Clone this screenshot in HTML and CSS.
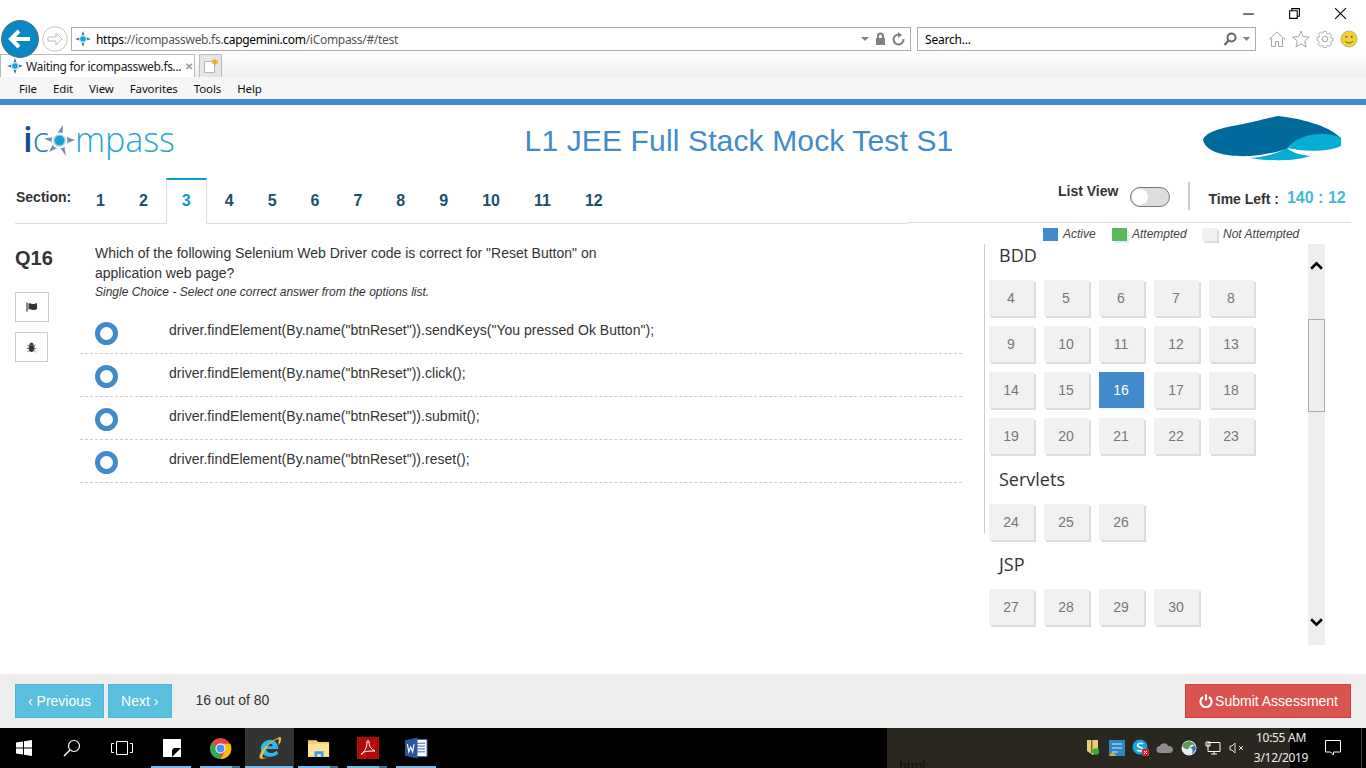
FILE: index.html
```html
<!DOCTYPE html>
<html lang="en">
<head>
    <meta charset="UTF-8">
    <title>iCompass</title>
    <link rel="stylesheet" href="styles.css">
</head>
<body>

    <!-- Browser window controls -->
    <div class="win-bar">
        <svg class="win-btn" viewBox="0 0 12 12"><path d="M1 6.500h10" stroke="#000" fill="none"/></svg>
        <svg class="win-btn" viewBox="0 0 12 12"><path d="M1.500 3.500h7v7h-7zM3.500 3.500v-2h7v7h-2" stroke="#000" fill="none"/></svg>
        <svg class="win-btn" viewBox="0 0 12 12"><path d="M1 1l10 10M11 1L1 11" stroke="#000" fill="none"/></svg>
    </div>

    <!-- Address row -->
    <div class="nav-row">
        <svg class="back-btn" viewBox="0 0 38 38">
            <circle cx="19" cy="19" r="18.500" fill="#0a87c5" stroke="#6b6b6b" stroke-width="1"/>
            <path d="M29 19H11M18 11l-8 8 8 8" stroke="#fff" stroke-width="4" fill="none"/>
        </svg>
        <svg class="forward-btn" viewBox="0 0 26 26">
            <circle cx="13" cy="13" r="12.300" fill="#fff" stroke="#c4c4c4"/>
            <path d="M6 11h8V7l6 6-6 6v-4H6z" fill="none" stroke="#bdbdbd"/>
        </svg>
        <div class="address-box">
            <svg class="favicon" viewBox="0 0 16 16">
                <path d="M8 0l2 6 6 2-6 2-2 6-2-6-6-2 6-2z" fill="#3e6fa3"/>
                <circle cx="8" cy="8" r="4" fill="#dcecf5"/>
                <circle cx="8" cy="8" r="2.800" fill="#17a5d8"/>
            </svg>
            <span class="url"><b>https</b>://icompassweb.fs.<b>capgemini.com</b>/iCompass/#/test</span>
            <svg class="addr-icons" viewBox="0 0 44 14">
                <path d="M0 5h8L4 9z" fill="#808080"/>
                <path d="M16 6V4a3.500 3.500 0 0 1 7 0v2h1v7H15V6zm2 0h3V4a1.500 1.500 0 0 0-3 0z" fill="#808080"/>
                <path d="M38 2.500a5 5 0 1 0 4.500 4.500" fill="none" stroke="#808080" stroke-width="2"/>
                <path d="M37 0v6l4-3z" fill="#808080"/>
            </svg>
        </div>
        <div class="search-box">
            <span>Search...</span>
            <svg class="search-icons" viewBox="0 0 28 14">
                <circle cx="8.500" cy="5.500" r="4" fill="none" stroke="#666" stroke-width="2"/>
                <path d="M5.500 8.500L1.500 13" stroke="#666" stroke-width="2.200"/>
                <path d="M20 5h7l-3.500 4z" fill="#808080"/>
            </svg>
        </div>
        <div class="tool-icons">
            <svg class="tool-icon" viewBox="0 0 18 18"><path d="M1 9.500L9 2l8 7.500M3.500 8v8.500h4v-5h3v5h4V8" fill="none" stroke="#a5a5a5"/></svg>
            <svg class="tool-icon" viewBox="0 0 18 18"><path d="M9 1l2.300 5.600 6 .5-4.600 3.900 1.400 5.900L9 13.800 3.900 16.900l1.400-5.900L.7 7.100l6-.5z" fill="none" stroke="#a5a5a5"/></svg>
            <svg class="tool-icon" viewBox="0 0 18 18"><circle cx="9" cy="9" r="2.800" fill="none" stroke="#a5a5a5"/><path d="M7.500 1h3l.5 2.400 1.500.6 2-1.300 2.100 2.100-1.300 2 .6 1.500 2.400.5v3l-2.400.5-.6 1.500 1.300 2-2.100 2.100-2-1.300-1.500.6-.5 2.400h-3l-.5-2.400-1.500-.6-2 1.300-2.100-2.100 1.300-2-.6-1.500L.1 10.800v-3l2.400-.5.600-1.500-1.300-2 2.100-2.100 2 1.300 1.500-.6z" transform="scale(.88) translate(1.100 .6)" fill="none" stroke="#a5a5a5"/></svg>
            <svg class="tool-icon" viewBox="0 0 18 18"><circle cx="9" cy="9" r="8" fill="#f3d033" stroke="#b9b48a"/><circle cx="6.300" cy="6.800" r="1" fill="#6b5a10"/><circle cx="11.700" cy="6.800" r="1" fill="#6b5a10"/><path d="M5 11c1.500 2.500 6.500 2.500 8 0" fill="none" stroke="#6b5a10"/></svg>
        </div>
    </div>

    <!-- Tab row -->
    <div class="tab-row">
        <div class="browser-tab">
            <svg class="favicon" viewBox="0 0 16 16">
                <path d="M8 0l2 6 6 2-6 2-2 6-2-6-6-2 6-2z" fill="#3e6fa3"/>
                <circle cx="8" cy="8" r="4" fill="#dcecf5"/>
                <circle cx="8" cy="8" r="2.800" fill="#17a5d8"/>
            </svg>
            <span class="tab-title">Waiting for icompassweb.fs...</span>
            <span class="tab-close">&#10005;</span>
        </div>
        <div class="new-tab">
            <svg viewBox="0 0 16 16" width="16" height="16">
                <path d="M1.500 3.500h10v11h-10z" fill="#fff" stroke="#b5b5b5"/>
                <path d="M12 0l1 2.500 2.500-.5-1.500 2 1.500 2-2.500-.5-1 2.500-1-2.500-2.500.5 1.500-2-1.500-2 2.500.5z" fill="#f5a623"/>
            </svg>
        </div>
    </div>

    <!-- Menu row -->
    <div class="menu-row">
        <span class="menu-item">File</span>
        <span class="menu-item">Edit</span>
        <span class="menu-item">View</span>
        <span class="menu-item">Favorites</span>
        <span class="menu-item">Tools</span>
        <span class="menu-item">Help</span>
    </div>

    <!-- Page -->
    <div class="page">
        <div class="page-header">
            <div class="logo">
                <span class="logo-i">i</span><span class="logo-c">c</span><svg class="logo-star" viewBox="0 0 31 32">
                    <path d="M19 0l-.5 10.500L31 15l-11 4.500L22 31l-6.500-9L5 27l4.500-9L0 13.500 10.500 12z" fill="#6e8fb5"/>
                    <circle cx="15.500" cy="15.500" r="8" fill="#fff"/>
                    <circle cx="15.500" cy="15.500" r="6.300" fill="#a9cfe4"/>
                    <circle cx="15.500" cy="15.500" r="4.800" fill="#12a3d4"/>
                </svg><span class="logo-rest">mpass</span>
            </div>
            <h1 class="page-title">L1 JEE Full Stack Mock Test S1</h1>
            <svg class="client-logo" viewBox="0 0 139 46">
                <path d="M0 25C2 17 18 13 40 9 55 6 65 3 75 1c20 2 50 9 63 22v1C125 31 100 33 84 34 70 38 60 40 47 41 25 42 3 38 0 25z" fill="#006a9c"/>
                <path d="M84 33c8-9 20-14 34-14 8 0 15 1 20 4v8c-13 6-38 6-54 2z" fill="#06add6"/>
                <path d="M47 43c15-1 29-5 37-10 6 5 14 7 24 8l-8 2C88 46 62 46 47 43z" fill="#06add6"/>
                <path d="M84 33c8 1 16 3 24 8-8-1-18-3-24-8z" fill="#fff"/>
            </svg>
        </div>

        <div class="section-row">
            <span class="section-label">Section:</span>
            <ul class="section-tabs">
                <li>1</li>
                <li>2</li>
                <li class="active">3</li>
                <li>4</li>
                <li>5</li>
                <li>6</li>
                <li>7</li>
                <li>8</li>
                <li>9</li>
                <li>10</li>
                <li>11</li>
                <li>12</li>
            </ul>
            <div class="section-right">
                <span class="list-view">List View</span>
                <span class="toggle"><span class="toggle-knob"></span></span>
                <span class="divider"></span>
                <span class="time-label">Time Left :</span>
                <span class="time-value">140 : 12</span>
            </div>
        </div>

        <div class="legend">
            <span class="swatch swatch-active"></span><span class="legend-text legend-active">Active</span>
            <span class="swatch swatch-attempted"></span><span class="legend-text legend-attempted">Attempted</span>
            <span class="swatch swatch-none"></span><span class="legend-text">Not Attempted</span>
        </div>

        <div class="main">
            <div class="q-side">
                <div class="q-no">Q16</div>
                <div class="q-btn q-btn-flag">
                    <svg viewBox="0 0 12 12" width="12" height="12"><path d="M1 1.500v9" stroke="#333" stroke-width="1.200"/><path d="M2.500 2.500c2-1 3 .5 4.500 .5s3-.5 4-1v6C10 8.500 9 9 7 9S4 8 2.500 8.500z" fill="#333"/></svg>
                </div>
                <div class="q-btn">
                    <svg viewBox="0 0 12 12" width="11" height="11"><path d="M4 3a2 2 0 0 1 4 0zM3.500 4h5v4a2.500 2.500 0 0 1-5 0zM1.500 3l2 2M10.500 3l-2 2M1 7h2.500M11 7H8.500M1.500 11l2-2M10.500 11l-2-2" fill="#333" stroke="#333" stroke-width=".8"/></svg>
                </div>
            </div>

            <div class="q-body">
                <div class="q-text">Which of the following Selenium Web Driver code is correct for "Reset Button" on application web page?</div>
                <div class="q-hint">Single Choice - Select one correct answer from the options list.</div>
                <div class="option"><span class="radio"></span><span>driver.findElement(By.name("btnReset")).sendKeys("You pressed Ok Button");</span></div>
                <div class="option"><span class="radio"></span><span>driver.findElement(By.name("btnReset")).click();</span></div>
                <div class="option"><span class="radio"></span><span>driver.findElement(By.name("btnReset")).submit();</span></div>
                <div class="option"><span class="radio"></span><span>driver.findElement(By.name("btnReset")).reset();</span></div>
            </div>

            <div class="palette">
                <div class="palette-list">
                    <h4 class="topic topic-first">BDD</h4>
                    <div class="num-grid">
                        <span class="num">4</span><span class="num">5</span><span class="num">6</span><span class="num">7</span><span class="num">8</span>
                        <span class="num">9</span><span class="num">10</span><span class="num">11</span><span class="num">12</span><span class="num">13</span>
                        <span class="num">14</span><span class="num">15</span><span class="num num-active">16</span><span class="num">17</span><span class="num">18</span>
                        <span class="num">19</span><span class="num">20</span><span class="num">21</span><span class="num">22</span><span class="num">23</span>
                    </div>
                    <h4 class="topic">Servlets</h4>
                    <div class="num-grid">
                        <span class="num">24</span><span class="num">25</span><span class="num">26</span>
                    </div>
                    <h4 class="topic">JSP</h4>
                    <div class="num-grid">
                        <span class="num">27</span><span class="num">28</span><span class="num">29</span><span class="num">30</span>
                    </div>
                    <h4 class="topic topic-cut">Core Skills</h4>
                </div>
                <div class="scrollbar">
                    <svg class="scroll-arrow" viewBox="0 0 12 8"><path d="M1 7l5-5 5 5" fill="none" stroke="#000" stroke-width="2.400"/></svg>
                    <span class="scroll-thumb"></span>
                    <svg class="scroll-arrow scroll-arrow-down" viewBox="0 0 12 8"><path d="M1 1l5 5 5-5" fill="none" stroke="#000" stroke-width="2.400"/></svg>
                </div>
            </div>
        </div>

        <div class="page-footer">
            <a class="btn btn-info">&#8249; Previous</a>
            <a class="btn btn-info btn-next">Next &#8250;</a>
            <span class="q-count">16 out of 80</span>
            <a class="btn btn-danger">
                <svg viewBox="0 0 14 14" width="14" height="14"><path d="M4 3a5.500 5.500 0 1 0 6 0" fill="none" stroke="#fff" stroke-width="2.200"/><path d="M7 .5v6" stroke="#fff" stroke-width="2.200"/></svg>
                Submit Assessment
            </a>
        </div>
    </div>

    <!-- Windows taskbar -->
    <div class="taskbar">
        <svg class="task-start" viewBox="0 0 16 16"><path d="M0 2.500l7-1V7.500H0zM8 1.300L16 0v7.500H8zM0 8.500h7v6l-7-1zM8 8.500h8V16l-8-1.200z" fill="#fff"/></svg>
        <svg class="task-search" viewBox="0 0 18 18"><circle cx="11" cy="7" r="5.500" fill="none" stroke="#fff" stroke-width="1.200"/><path d="M7 11l-6 6" stroke="#fff" stroke-width="1.400"/></svg>
        <svg class="task-view" viewBox="0 0 22 14"><path d="M5.500 .5h11v13h-11zM3 2.500H.5v9H3M19 2.500h2.500v9H19" fill="none" stroke="#fff"/></svg>
        <div class="task-apps">
            <span class="task-app"><svg viewBox="0 0 18 18" width="18" height="18"><path d="M0 0h18v18H0z" fill="#fff"/><path d="M9 18l9-9H11l-2 2z" fill="#000"/></svg></span>
            <span class="task-app task-app-multi"><svg viewBox="0 0 24 24" width="23" height="23"><circle cx="12" cy="12" r="11" fill="#e8453c"/><path d="M12 12L2.500 6.500A11 11 0 0 0 12 23z" fill="#34a853"/><path d="M12 7h10.200A11 11 0 0 1 12 23l5-9z" fill="#fbbc05"/><circle cx="12" cy="12" r="5.300" fill="#fff"/><circle cx="12" cy="12" r="4.200" fill="#4e8ef7"/></svg></span>
            <span class="task-app task-app-active"><svg viewBox="0 0 26 26" width="24" height="24"><path d="M3 14c0-6 5-10 10-10s9 4 9 10H9c0 5 7 6 11 2l2 3c-6 6-19 4-19-5zm6-3h7c0-4-6-4-7 0z" fill="#2fb8ec"/><path d="M2 24C0 20 8 7 24 1c2 1 1 6-2 9 0-3 1-6 0-7C12 6 4 19 5 23c1 1 4 1 7-1-3 3-8 3-10 2z" fill="#f2c02e"/></svg></span>
            <span class="task-app task-app-multi"><svg viewBox="0 0 24 20" width="22" height="19"><path d="M0 1h9l2 2h12v16H0z" fill="#f5cf6b"/><path d="M0 5h23v14H0z" fill="#fde39a"/><path d="M7 13h10v6H7z" fill="#2ea6e0"/><path d="M10 16h4v3h-4z" fill="#fde39a"/></svg></span>
            <span class="task-app task-app-multi"><svg viewBox="0 0 22 22" width="22" height="22"><path d="M0 0h22v22H0z" fill="#b30b0b"/><path d="M4 17c4-2 6-7 6-12 0-2 2-2 2 0 0 4 2 7 6 9-4 0-8 0-11 1-1 1-2 3-3 2z" fill="none" stroke="#fff"/></svg></span>
            <span class="task-app"><svg viewBox="0 0 24 22" width="23" height="22"><path d="M9 2h14v18H9z" fill="#fff" stroke="#3b5f9e"/><path d="M12 6h9M12 9h9M12 12h9M12 15h9" stroke="#3b5f9e"/><path d="M0 3l13-3v22L0 19z" fill="#2b579a"/><path d="M2.500 7l1.500 8 2-5 2 5 1.500-8" stroke="#fff" fill="none" stroke-width="1.200"/></svg></span>
        </div>
        <div class="task-tray">
            <span class="peek-text">html;</span>
            <div class="tray-icons">
                <svg viewBox="0 0 14 16" width="14" height="16"><path d="M1 0h11v10l-5 5-6-4z" fill="#e9cf73"/><path d="M5 0h1.500v13H5z" fill="#7a6a2a"/><circle cx="10" cy="11.500" r="3.200" fill="#2eaf35"/></svg>
                <svg viewBox="0 0 16 16" width="16" height="16"><path d="M0 0h16v16H0z" fill="#2e87c5"/><path d="M3 4h10M3 8h10M3 12h6" stroke="#d4ecf7"/><path d="M0 16l4-5 3 5z" fill="#d9a441"/></svg>
                <svg viewBox="0 0 18 18" width="18" height="18"><circle cx="8" cy="8" r="7.500" fill="#14a5e0"/><path d="M11 5c-1-1-6-1-5.500 1.500S11 8 10.800 10.500 6 12 5 11" fill="none" stroke="#fff" stroke-width="1.500"/><path d="M10 10h7v7h-7z" fill="#d8232a"/><path d="M12 12l3 3M15 12l-3 3" stroke="#fff"/></svg>
                <svg viewBox="0 0 18 12" width="18" height="12"><path d="M4 11a3.500 3.500 0 0 1 0-7c1-3 7-4 8 0 3-.5 5 1.500 5 3.500S15.500 11 14 11z" fill="#8d8d8d"/></svg>
                <svg viewBox="0 0 16 16" width="16" height="16"><circle cx="8" cy="8" r="7.500" fill="#e8eef0"/><path d="M1 6c3-6 10-6 13-1-3-1-5 0-6 3-2 3-5 0-7-2z" fill="#5f9a5a"/><path d="M9 8c3 0 3 3 2 7l4-6-1-4z" fill="#2f78b5"/></svg>
                <svg viewBox="0 0 16 14" width="16" height="14"><path d="M3 1.500h12v9H3zM1 1h4v4H1zM6 13h6M9 10.500V13" fill="#2a2720" stroke="#fff"/></svg>
                <svg viewBox="0 0 16 14" width="16" height="14"><path d="M1 5h2l3-3v10L3 9H1zM10 5l4 4M14 5l-4 4" fill="none" stroke="#ddd"/></svg>
            </div>
            <div class="clock">10:55 AM<br>3/12/2019</div>
            <svg class="notify" viewBox="0 0 16 16"><path d="M.5 .5h15v11.500H8.500v3l-3-3H.5z" fill="none" stroke="#fff"/></svg>
        </div>
    </div>

</body>
</html>
```
FILE: styles.css
```css
* {
    box-sizing: border-box;
}
body {
    margin: 0;
    width: 1366px;
    height: 768px;
    overflow: hidden;
    display: flex;
    flex-direction: column;
    background: #fff;
    font-family: "Liberation Sans", Arial, sans-serif;
    color: #333;
}

/* browser chrome */
.win-bar {
    height: 27px;
    flex: none;
    display: flex;
    justify-content: flex-end;
    align-items: center;
    gap: 33px;
    padding: 0 19px 0 0;
}
.win-btn {
    width: 13px;
    height: 13px;
}
.nav-row {
    height: 27px;
    flex: none;
    position: relative;
    display: flex;
    padding-left: 71px;
}
.back-btn {
    position: absolute;
    left: 1px;
    top: -7px;
    width: 38px;
    height: 38px;
}
.forward-btn {
    position: absolute;
    left: 42px;
    top: -1px;
    width: 26px;
    height: 26px;
}
.address-box, .search-box {
    height: 24px;
    border: 1px solid #adadad;
    display: flex;
    align-items: center;
    font-family: "Noto Sans", "Open Sans", sans-serif;
    font-size: 12px;
    background: #fff;
}
.address-box {
    width: 840px;
    padding-left: 3px;
    color: #555;
}
.favicon {
    width: 16px;
    height: 16px;
    flex: none;
}
.url {
    margin-left: 5px;
    flex: 1;
    letter-spacing: -.3px;
}
.url b {
    font-weight: 400;
    color: #000;
}
.addr-icons {
    width: 44px;
    height: 14px;
    margin-right: 5px;
}
.search-box {
    width: 339px;
    margin-left: 6px;
    padding-left: 7px;
    justify-content: space-between;
    color: #000;
    letter-spacing: -.2px;
}
.search-icons {
    width: 28px;
    height: 14px;
    margin-right: 4px;
}
.tool-icons {
    display: flex;
    gap: 6px;
    margin-left: 12px;
    height: 24px;
    align-items: center;
}
.tool-icon {
    width: 18px;
    height: 18px;
}
.tab-row {
    height: 23px;
    flex: none;
    display: flex;
    background: linear-gradient(#fff, #eee);
}
.browser-tab {
    width: 195px;
    background: #fff;
    border: 1px solid #bbb;
    border-bottom: 0;
    display: flex;
    align-items: center;
    padding-left: 6px;
    font-family: "Noto Sans", "Open Sans", sans-serif;
    font-size: 12px;
    letter-spacing: -.33px;
    color: #222;
}
.tab-title {
    margin-left: 3px;
    flex: 1;
    white-space: nowrap;
}
.tab-close {
    font-size: 10px;
    color: #999;
    margin-right: 1px;
    font-weight: 700;
}
.new-tab {
    width: 23px;
    margin-left: 4px;
    background: #e6e6e6;
    border: 1px solid #bbb;
    border-bottom: 0;
    display: flex;
    align-items: center;
    justify-content: center;
}
.menu-row {
    height: 22px;
    flex: none;
    background: #f6f6f6;
    display: flex;
    align-items: center;
    padding-left: 19px;
    gap: 16px;
    font-family: "Noto Sans", "Open Sans", sans-serif;
    font-size: 11.5px;
    letter-spacing: -.12px;
    color: #111;
}

/* page */
.page {
    flex: 1;
    display: flex;
    flex-direction: column;
    border-top: 6px solid #428bca;
    min-height: 0;
}
.page-header {
    height: 73px;
    flex: none;
    display: flex;
    align-items: center;
    justify-content: space-between;
    padding: 0 24px;
    position: relative;
}
.logo {
    display: flex;
    align-items: center;
    font-family: "Open Sans", sans-serif;
    font-weight: 300;
    font-size: 34px;
    line-height: 40px;
    color: #2aa5d6;
    margin: -5px 0 0 -1px;
}
.logo-i {
    color: #0f4f8f;
    font-weight: 600;
    font-size: 35px;
}
.logo-c {
    color: #2a7fb8;
}
.logo-star {
    width: 31px;
    height: 32px;
    margin: 4px 0 0 -5px;
}
.page-title {
    position: absolute;
    left: 0;
    right: 0;
    top: 18px;
    margin: 0 0 0 112px;
    text-align: center;
    font-size: 30px;
    letter-spacing: .14px;
    line-height: 36px;
    font-weight: 400;
    color: #428bca;
}
.client-logo {
    width: 139px;
    height: 46px;
    margin: -8px 0 0 0;
}
.section-row {
    height: 46px;
    flex: none;
    display: flex;
    margin: 0 15px;
}
.section-label {
    width: 65px;
    font-size: 14px;
    font-weight: 700;
    padding: 11px 0 0 1px;
    border-bottom: 1px solid #ddd;
}
.section-tabs {
    list-style: none;
    margin: 0;
    padding: 0;
    display: flex;
    width: 827px;
    border-bottom: 1px solid #ddd;
}
.section-tabs li {
    padding: 13px 15px 0;
    margin-right: 2px;
    font-size: 16px;
    font-weight: 700;
    color: #1d4f6e;
    line-height: 16px;
    border: 1px solid transparent;
    border-top-width: 2px;
    border-bottom: 0;
    height: 46px;
}
.section-tabs li.active {
    color: #0a9bd2;
    background: #fff;
    border-color: #ddd;
    border-top-color: #0a9bd2;
}
.section-right {
    flex: 1;
    position: relative;
    display: flex;
    border-bottom: 1px solid #ddd;
    margin-bottom: 1px;
    padding: 4px 5px 0 151px;
    font-size: 14px;
    font-weight: 700;
    white-space: nowrap;
}
.list-view {
    font-size: 14px;
    padding-top: 1px;
    line-height: 16px;
}
.toggle {
    width: 40px;
    height: 20px;
    margin: 5px 0 0 12px;
    border: 1px solid #777;
    border-radius: 10px;
    background: #ddd;
    padding: 1px;
}
.toggle-knob {
    display: block;
    width: 16px;
    height: 16px;
    border-radius: 50%;
    background: #fff;
}
.divider {
    width: 2px;
    height: 28px;
    background: #ccc;
    margin: 0 18px 0 18px;
}
.time-label {
    font-size: 14px;
    padding-top: 9px;
    line-height: 16px;
}
.time-value {
    font-size: 16px;
    color: #46b8da;
    margin-left: 8px;
    padding-top: 8px;
    line-height: 16px;
}
.legend {
    height: 20px;
    flex: none;
    display: flex;
    padding: 4px 0 0 1043px;
    font-size: 12px;
    font-style: italic;
    line-height: 13px;
    color: #444;
}
.swatch {
    width: 15px;
    height: 13px;
    margin-right: 5px;
}
.swatch-active {
    background: #428bca;
}
.swatch-attempted {
    background: #5cb85c;
    box-shadow: 2px 2px 0 #d9edf7;
}
.swatch-none {
    background: #f0f0f0;
    box-shadow: 2px 2px 0 #ddd;
    margin-right: 6px;
}
.legend-active {
    width: 49px;
}
.legend-attempted {
    width: 70px;
}
.main {
    flex: 1;
    display: flex;
    min-height: 0;
}
.q-side {
    width: 80px;
    flex: none;
    padding-left: 15px;
}
.q-no {
    font-size: 20px;
    font-weight: 700;
    line-height: 28px;
    margin-bottom: 20px;
}
.q-btn {
    width: 33px;
    height: 30px;
    margin-bottom: 10px;
    border: 1px solid #ccc;
    display: flex;
    align-items: center;
    justify-content: center;
}
.q-btn-flag {
    width: 34px;
}
.q-body {
    width: 882px;
    flex: none;
}
.q-text {
    width: 540px;
    margin: -1px 0 0 15px;
    font-size: 14px;
    line-height: 20px;
}
.q-hint {
    margin: 1px 0 10px 15px;
    font-size: 12px;
    font-style: italic;
    line-height: 17px;
}
.option {
    height: 43px;
    display: flex;
    align-items: flex-start;
    padding: 11px 0 0 15px;
    font-size: 14px;
    letter-spacing: .03px;
    line-height: 16px;
    border-bottom: 1px dashed #ccc;
}
.radio {
    width: 23px;
    height: 23px;
    border: 5px solid #428bca;
    border-radius: 50%;
    background: #fff;
    margin-right: 51px;
    flex: none;
}
.palette {
    width: 341px;
    margin-left: 22px;
    position: relative;
    display: flex;
    height: 401px;
}
.palette::before {
    content: "";
    position: absolute;
    left: 0;
    top: 0;
    width: 1px;
    height: 289px;
    background: #ccc;
}
.palette-list {
    width: 324px;
    overflow: hidden;
    padding-left: 5px;
}
.topic {
    margin: 0;
    padding: 14px 0 15px 10px;
    font-family: "Open Sans", sans-serif;
    font-size: 18px;
    font-weight: 400;
    line-height: 20px;
    color: #333;
}
.topic-first {
    padding-top: 1px;
}
.topic-first + .num-grid {
    margin-bottom: 1px;
}
.topic-cut {
    padding-top: 18px;
}
.num-grid {
    display: flex;
    flex-wrap: wrap;
    gap: 10px;
    width: 280px;
}
.num {
    width: 45px;
    height: 36px;
    padding-right: 1px;
    background: #f1f1f1;
    box-shadow: 2px 2px 0 #ddd;
    color: #777;
    font-size: 14px;
    display: flex;
    align-items: center;
    justify-content: center;
}
.num-active {
    background: #428bca;
    color: #fff;
    box-shadow: 2px 2px 0 #f3f7fb;
}
.scrollbar {
    width: 17px;
    background: #eee;
    position: relative;
}
.scroll-arrow {
    position: absolute;
    left: 2px;
    top: 17px;
    width: 13px;
    height: 9px;
}
.scroll-arrow-down {
    top: 374px;
}
.scroll-thumb {
    position: absolute;
    left: 0;
    top: 75px;
    width: 17px;
    height: 93px;
    background: #eee;
    border: 1px solid #adadad;
}
.page-footer {
    height: 54px;
    flex: none;
    background: #eee;
    display: flex;
    align-items: flex-start;
    padding: 10px 15px 0;
    font-size: 14px;
}
.btn {
    height: 34px;
    display: flex;
    align-items: center;
    padding: 0 12px;
    border: 1px solid transparent;
    color: #fff;
    white-space: nowrap;
}
.btn-info {
    background: #5bc0de;
    border-color: #46b8da;
}
.btn-next {
    margin-left: 4px;
    padding-right: 13px;
}
.q-count {
    margin: 0 0 0 23px;
    line-height: 32px;
}
.btn-danger {
    margin-left: auto;
    padding-left: 13px;
    background: #d9534f;
    border-color: #d43f3a;
    gap: 2px;
}

/* windows taskbar */
.taskbar {
    height: 40px;
    flex: none;
    background: #000;
    display: flex;
    align-items: center;
    position: relative;
}
.task-start {
    width: 16px;
    height: 16px;
    margin-left: 16px;
}
.task-search {
    width: 18px;
    height: 18px;
    margin-left: 31px;
}
.task-view {
    width: 22px;
    height: 14px;
    margin-left: 30px;
}
.task-apps {
    display: flex;
    height: 40px;
    margin-left: 14px;
}
.task-app {
    width: 49px;
    height: 40px;
    display: flex;
    align-items: center;
    justify-content: center;
    position: relative;
}
.task-app::after {
    content: "";
    position: absolute;
    left: 4px;
    right: 5px;
    bottom: 0;
    height: 2px;
    background: #76b9ed;
}
.task-app-multi::after {
    background: linear-gradient(90deg, #76b9ed 32px, #47708e 32px);
}
.task-app-active {
    background: #333;
}
.task-app-active::after {
    left: 0;
    right: 1px;
}
.task-tray {
    position: absolute;
    left: 887px;
    right: 0;
    top: 0;
    height: 40px;
    display: flex;
    align-items: center;
    background: linear-gradient(90deg, #2a2720 0, #2a2720 403px, #000 403px);
    color: #fff;
}
.task-tray::after {
    content: "";
    position: absolute;
    right: 4px;
    top: 0;
    width: 1px;
    height: 40px;
    background: #444;
}
.peek-text {
    position: absolute;
    left: 12px;
    top: 30px;
    font-size: 14px;
    color: #111;
}
.tray-icons {
    display: grid;
    grid-template-columns: repeat(7, 24px);
    align-items: center;
    justify-items: center;
    margin-left: 194px;
}
.clock {
    width: 60px;
    margin-left: 2px;
    font-family: "Noto Sans", "Open Sans", sans-serif;
    font-size: 12px;
    letter-spacing: -.3px;
    line-height: 20px;
    text-align: center;
    color: #eee;
}
.notify {
    width: 16px;
    height: 16px;
    margin-left: 14px;
}
```
